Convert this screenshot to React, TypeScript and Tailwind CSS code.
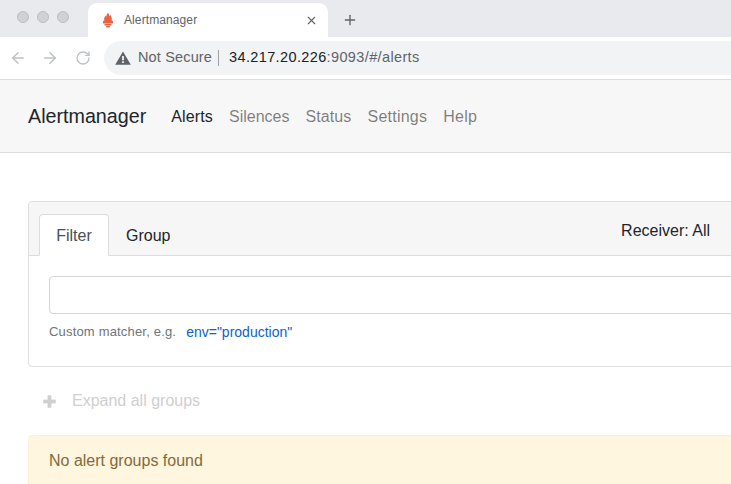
import React from 'react';
import { ArrowLeft, ArrowRight, RotateCw, X, Plus } from 'lucide-react';

const Flame = () => (
  <svg width="12" height="16" viewBox="0 0 12 16" className="text-[#e8633f]">
    <path fill="currentColor" d="M6 0.500c.4 1.600 1.400 2.200 1.600 3.400.5-.3.6-.8.6-1.200 1 1.200 1.600 2.600 1.600 4v2.200H2.200V6.700c0-1.300.7-2.100 1.400-2.900.2.4.3.7.6.9C4.300 3.200 5.300 2 6 .5z" />
    <rect x="1" y="8.800" width="10" height="2.700" rx="0.500" fill="currentColor" />
    <rect x="2.500" y="12" width="7" height="1.500" fill="currentColor" />
    <rect x="4" y="14" width="4" height="1.400" rx="0.700" fill="currentColor" />
  </svg>
);

const Warning = () => (
  <svg width="16" height="14" viewBox="0 0 16 14">
    <path fill="#5f6368" fillRule="evenodd" d="M8 0.500 L15.800 13.800 H0.200 Z M7.100 5 V9.300 H8.900 V5 Z M7.100 10.300 V12 H8.900 V10.300 Z" />
  </svg>
);

export default function App() {
  return (
    <div className="w-[731px] h-[484px] overflow-hidden bg-white font-['Liberation_Sans',Arial,sans-serif] text-[#212529]">
      {/* browser tabs */}
      <div className="h-[37px] bg-[#e8eaed] flex items-end">
        <div className="flex items-center gap-2 pl-[17px] h-[37px] pb-[3px]">
          <span className="w-3 h-3 rounded-full bg-[#d0d1d3] border border-[#bdbec0]" />
          <span className="w-3 h-3 rounded-full bg-[#d0d1d3] border border-[#bdbec0]" />
          <span className="w-3 h-3 rounded-full bg-[#d0d1d3] border border-[#bdbec0]" />
        </div>
        <div className="ml-[19px] w-[240px] h-[34px] bg-white rounded-t-[9px] flex items-center pl-[14px] pr-[10px]">
          <Flame />
          <span className="ml-[10px] text-xs text-[#5f6368] tracking-[0.1px]">Alertmanager</span>
          <X size={13} strokeWidth={2} className="ml-auto text-[#5f6368]" />
        </div>
        <Plus size={16} strokeWidth={2} className="ml-[14px] mb-[9px] text-[#5f6368]" />
      </div>

      {/* toolbar */}
      <div className="h-[43px] bg-white border-b border-[#dadce0] flex items-center">
        <ArrowLeft size={18} strokeWidth={2} className="ml-[9px] text-[#bdc1c6]" />
        <ArrowRight size={18} strokeWidth={2} className="ml-[14px] text-[#bdc1c6]" />
        <RotateCw size={16} strokeWidth={2} className="ml-[16px] text-[#bdc1c6]" />
        <div className="ml-[13px] flex-1 h-[34px] -mt-px bg-[#f1f3f4] rounded-l-[17px] flex items-center pl-[11px]">
          <Warning />
          <span className="ml-[7px] pt-px text-[14.5px] tracking-[0.15px] text-[#5f6368]">Not Secure</span>
          <span className="ml-[6px] w-px h-4 bg-[#9aa0a6]" />
          <span className="ml-[10px] pt-px text-[14.5px] text-[#202124] tracking-[0.37px]">34.217.20.226<span className="text-[#5f6368]">:9093/#/alerts</span></span>
        </div>
      </div>

      {/* navbar */}
      <nav className="h-[73px] bg-[#f7f7f7] border-b border-[#dcdcdc] flex items-center pl-[28px] pt-px">
        <span className="text-[19.700px] text-[#212529]">Alertmanager</span>
        <span className="ml-[25px] text-base tracking-[0.15px] text-[#212529]">Alerts</span>
        <span className="ml-4 text-base text-[#00000080]">Silences</span>
        <span className="ml-4 text-base tracking-[0.1px] text-[#00000080]">Status</span>
        <span className="ml-4 text-base tracking-[0.25px] text-[#00000080]">Settings</span>
        <span className="ml-4 text-base tracking-[0.25px] text-[#00000080]">Help</span>
      </nav>

      {/* filter card */}
      <div className="ml-[28px] mt-[48px] w-[760px] border border-[#dfdfdf] rounded bg-white">
        <div className="h-[54px] bg-[#f6f6f7] border-b border-[#dcdcdc] flex items-end pl-[10px] pr-[77px] rounded-t">
          <div className="h-[42px] w-[70px] -mb-px pt-[2px] bg-white border border-[#dcdcdc] border-b-white rounded-t flex items-center justify-center text-base text-[#495057]">Filter</div>
          <div className="h-[42px] ml-[17px] pt-1 flex items-center text-base text-[#212529]">Group</div>
          <div className="ml-auto h-[54px] pt-[18px] text-base text-[#212529]">Receiver: All</div>
        </div>
        <div className="pt-[20px] pl-[20px] pb-[25px]">
          <div className="h-[38px] border border-[#d6d6d6] rounded bg-white" />
          <div className="mt-[9px] h-[18px] flex items-center text-[13px] tracking-[0.18px] text-[#6c757d]">
            <span>Custom matcher, e.g.</span>
            <span className="ml-[10px] text-sm tracking-normal text-[#0e62c9]">env="production"</span>
          </div>
        </div>
      </div>

      {/* expand */}
      <div className="ml-[42px] mt-[22px] h-6 flex items-center text-base text-[#cfcfcf]">
        <Plus size={15} strokeWidth={6} strokeLinecap="square" />
        <span className="ml-[15px]">Expand all groups</span>
      </div>

      {/* alert */}
      <div className="ml-[28px] mt-[22px] w-[760px] h-[60px] bg-[#fff6e0] border border-[#fdf0cf] rounded pl-5 pt-[13px] text-base text-[#85693c]">
        No alert groups found
      </div>
    </div>
  );
}
